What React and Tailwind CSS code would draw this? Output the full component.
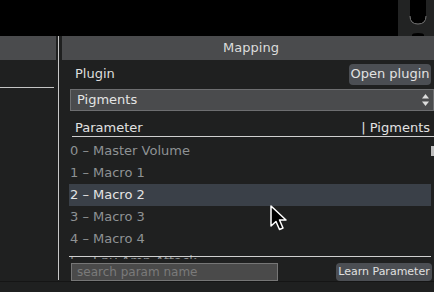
import React from "react";

const font = { fontFamily: '"DejaVu Sans", Verdana, sans-serif' };

const Params = [
  { id: 0, name: "0 – Master Volume" },
  { id: 1, name: "1 – Macro 1" },
  { id: 2, name: "2 – Macro 2", selected: true },
  { id: 3, name: "3 – Macro 3" },
  { id: 4, name: "4 – Macro 4" },
  { id: 5, name: "5 – Env Amp Attack" },
];

const Cursor = () => (
  <svg width="20" height="28" viewBox="0 0 20 28" className="absolute left-[268px] top-[204px]">
    <path
      d="M3 2 L3 22 L8 17.5 L11.5 25.5 L15 24 L11.5 16 L18 16 Z"
      fill="#000"
      stroke="#fff"
      strokeWidth="1.5"
      strokeLinejoin="round"
    />
  </svg>
);

const App = () => {
  return (
    <div className="w-[434px] h-[292px] bg-black flex flex-col overflow-hidden relative text-[13px]" style={font}>
      {/* top strip */}
      <div className="h-[36px] flex justify-end">
        <svg width="36" height="36" viewBox="0 0 36 36">
          <rect x="0" y="0" width="36" height="36" fill="#222323" />
          <path d="M12 0 L12 16 Q12 24 20 24 Q28 24 28 16 L28 0 Z" fill="#000" />
          <path d="M12 16 Q12 24 20 24 Q28 24 28 16" fill="none" stroke="#777" strokeWidth="1" />
          <path d="M14 36 L14 35 Q14 33 20 33 Q26 33 26 35 L26 36 Z" fill="#000" />
        </svg>
      </div>

      {/* main */}
      <div className="flex flex-1 min-h-0">
        {/* left column */}
        <div className="w-[56px] flex flex-col bg-[#1f2020]">
          <div className="h-[24px] bg-[#4a4b4d]" />
          <div className="h-[28px] border-b border-[#c4c4c4] mr-[2px]" />
        </div>

        {/* gutter with line */}
        <div className="w-[6px] bg-[#1f2020] flex flex-col">
          <div className="ml-[2px] w-px h-[244px] bg-[#c8c8c8]" />
        </div>

        {/* right panel */}
        <div className="flex-1 flex flex-col bg-[#1f2020] relative">
          <div className="h-[24px] bg-[#4a4b4d] flex items-center justify-center pl-[6px] text-[#dcdcdc]">
            Mapping
          </div>

          <div className="h-[26px] flex items-center justify-between pl-[13px] pr-[3px] pt-[2px]">
            <span className="text-[#dedede]">Plugin</span>
            <button className="h-[21px] w-[82px] rounded-[4px] bg-[#4b4e53] text-[#e2e2e2]">Open plugin</button>
          </div>

          <div className="mt-[3px] ml-[8px] h-[22px] bg-[#4a4b4d] border border-[#6d6e70] flex items-center justify-between pl-[6px] pr-[3px] text-[#e4e4e4]">
            <span>Pigments</span>
            <svg width="9" height="14" viewBox="0 0 9 14">
              <path d="M4.5 1 L8 5.5 L1 5.5 Z" fill="#ddd" />
              <path d="M4.5 13 L8 8.5 L1 8.5 Z" fill="#ddd" />
            </svg>
          </div>

          <div className="mt-[8px] ml-[10px] h-[18px] border-b border-[#cfcfcf] flex items-center justify-between pl-[3px] pr-[4px] text-[#e2e2e2]">
            <span>Parameter</span>
            <span>| Pigments</span>
          </div>

          <div className="relative ml-[7px] mr-[3px] mt-[2px] h-[120px] overflow-hidden">
            <div className="pt-[1px]">
              {Params.map((p) => (
                <div
                  key={p.id}
                  className={
                    p.selected
                      ? "h-[22px] flex items-center pl-[1px] bg-[#3a4048] text-[#e4e4e4]"
                      : "h-[22px] flex items-center pl-[1px] text-[#8e9294]"
                  }
                >
                  {p.name}
                </div>
              ))}
            </div>
            <div className="absolute left-0 right-[-3px] top-[117px] h-px bg-[#cfcfcf]" />
          </div>
          <div className="absolute right-0 top-[110px] w-[3px] h-[10px] bg-[#bdbdbd]" />

          <div className="flex items-center justify-between ml-[9px] mr-[2px] mt-[4px]">
            <input
              type="text"
              placeholder="search param name"
              className="w-[207px] h-[18px] bg-[#4a4a4a] border border-[#767676] px-[5px] text-[12px] text-[#ddd] placeholder:text-[#7a7a7a] outline-none"
              style={font}
            />
            <button className="w-[96px] h-[18px] rounded-[4px] bg-[#4b4e53] text-[11px] text-[#e0e0e0]">
              Learn Parameter
            </button>
          </div>
        </div>
      </div>

      {/* bottom strip */}
      <div className="h-[11px] bg-[#1f2020] border-t border-[#151515]" />

      <Cursor />
    </div>
  );
};

export default App;
